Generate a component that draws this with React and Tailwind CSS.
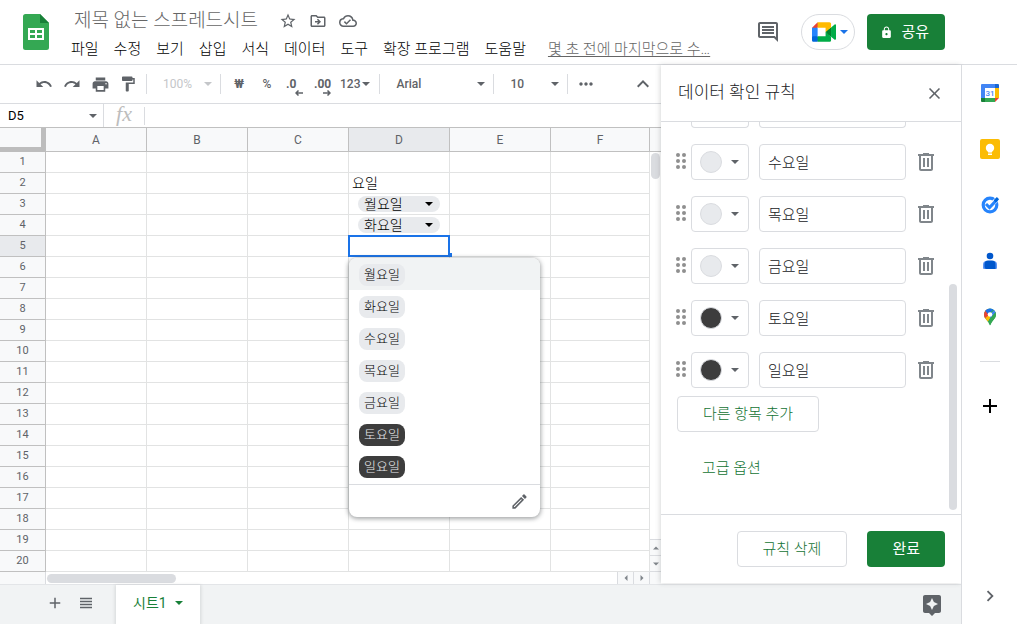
import React, { useState } from 'react'
import clsx from 'clsx'
import {
	MdAdd,
	MdAssistant,
	MdChevronRight,
	MdClose,
	MdFormatPaint,
	MdKeyboardArrowUp,
	MdLock,
	MdMoreHoriz,
	MdOutlineCloudDone,
	MdOutlineComment,
	MdOutlineDriveFileMove,
	MdOutlineModeEdit,
	MdPrint,
	MdRedo,
	MdStarBorder,
	MdUndo,
	MdViewHeadline,
} from 'react-icons/md'

const menus = ['파일', '수정', '보기', '삽입', '서식', '데이터', '도구', '확장 프로그램', '도움말']

const columns = ['A', 'B', 'C', 'D', 'E', 'F']
const rows = Array.from({ length: 20 }, (_, i) => i + 1)
const selected = { col: 'D', row: 5 }

const cells = {
	D2: { type: 'text', value: '요일' },
	D3: { type: 'chip', value: '월요일' },
	D4: { type: 'chip', value: '화요일' },
}

const options = [
	{ label: '월요일', dark: false },
	{ label: '화요일', dark: false },
	{ label: '수요일', dark: false },
	{ label: '목요일', dark: false },
	{ label: '금요일', dark: false },
	{ label: '토요일', dark: true },
	{ label: '일요일', dark: true },
]

function Caret({ className }) {
	return (
		<svg viewBox="0 0 8 4" className={clsx('w-2 h-1 shrink-0', className)} fill="currentColor">
			<path d="M0 0h8L4 4z" />
		</svg>
	)
}

function SheetsLogo() {
	return (
		<svg viewBox="0 0 26 36" className="w-[26px] h-9">
			<path fill="#34a853" d="M2.5 0H17l9 9v24.500a2.500 2.500 0 0 1-2.500 2.500h-21A2.500 2.500 0 0 1 0 33.500v-31A2.500 2.500 0 0 1 2.500 0z" />
			<path fill="#188038" d="M17 0l9 9h-9z" />
			<path fill="#fff" fillRule="evenodd" d="M5 14h16v12H5zM7 16v3h5v-3zM14 16v3h5v-3zM7 21v3h5v-3zM14 21v3h5v-3z" />
		</svg>
	)
}

function MeetLogo() {
	return (
		<svg viewBox="0 0 87.5 72" className="w-6 h-5">
			<path fill="#fff" d="M20 20h30v32H20z" />
			<path fill="#00832d" d="M49.5 36l8.53 9.75 11.47 7.33 2-17.02-2-16.64-11.69 6.44z" />
			<path fill="#0066da" d="M0 51.5V66c0 3.315 2.685 6 6 6h14.5l3-10.96-3-9.54-9.95-3z" />
			<path fill="#e94235" d="M20.5 0L0 20.5l10.55 3 9.95-3 2.95-9.41z" />
			<path fill="#2684fc" d="M20.5 20.500H0v31h20.500z" />
			<path fill="#00ac47" d="M82.6 8.68L69.5 19.42v33.66l13.16 10.79c1.97 1.54 4.85.135 4.85-2.37V11c0-2.535-2.945-3.925-4.91-2.32zM49.5 36v15.500h-29V72h43c3.315 0 6-2.685 6-6V53.080z" />
			<path fill="#ffba00" d="M63.5 0h-43v20.500h29V36l20-16.570V6c0-3.315-2.685-6-6-6z" />
		</svg>
	)
}

function TrashIcon() {
	return (
		<svg viewBox="0 0 24 24" className="w-6 h-6" fill="currentColor">
			<path d="M15 4V3H9v1H4v2h1v13c0 1.100.9 2 2 2h10c1.100 0 2-.9 2-2V6h1V4h-5zm2 15H7V6h10v13zM9 8h2v9H9zm4 0h2v9h-2z" />
		</svg>
	)
}

function DragDots() {
	return (
		<svg viewBox="0 0 10 18" className="w-[10px] h-[18px]" fill="#8f8f8f">
			{[2, 8, 14].map(y => (
				<g key={y}>
					<circle cx="2" cy={y} r="2" />
					<circle cx="8" cy={y} r="2" />
				</g>
			))}
		</svg>
	)
}

function CalendarIcon() {
	return (
		<svg viewBox="0 0 20 20" className="w-5 h-5">
			<path fill="#4285f4" d="M2 1h13v4H5v10H1V2a1 1 0 0 1 1-1z" />
			<path fill="#1967d2" d="M15 1h3a1 1 0 0 1 1 1v3h-4z" />
			<path fill="#fbbc04" d="M15 5h4v10h-4z" />
			<path fill="#34a853" d="M5 15h10v4H5z" />
			<path fill="#188038" d="M1 15h4v4H2a1 1 0 0 1-1-1z" />
			<path fill="#ea4335" d="M15 15h4l-4 4z" />
			<path fill="#fff" d="M5 5h10v10H5z" />
			<text x="10" y="13" textAnchor="middle" fontSize="8" fontWeight="500" fill="#4285f4">31</text>
		</svg>
	)
}

function KeepIcon() {
	return (
		<svg viewBox="0 0 20 20" className="w-5 h-5">
			<rect width="20" height="20" rx="2" fill="#fbbc04" />
			<circle cx="10" cy="9" r="4.200" fill="#fff" />
			<path fill="#fff" d="M8 11h4v2.500H8zM8 14.500h4v1.500H8z" />
		</svg>
	)
}

function TasksIcon() {
	return (
		<svg viewBox="0 0 20 20" className="w-5 h-5" fill="none">
			<circle cx="10" cy="10" r="6.800" stroke="#2684fc" strokeWidth="3.200" />
			<path d="M10 11L18.500 3" stroke="#fff" strokeWidth="4.500" />
			<path d="M6 9l3.500 3.500L17 4.600" stroke="#2684fc" strokeWidth="3" />
			<path d="M14.800 6.400L18 3.200" stroke="#0066da" strokeWidth="3.200" />
		</svg>
	)
}

function ContactsIcon() {
	return (
		<svg viewBox="0 0 20 20" className="w-5 h-5">
			<circle cx="10" cy="5" r="3.300" fill="#0057cc" />
			<path fill="#5c95f5" d="M6.500 10h7a3.500 3.500 0 0 1 3.500 3.500V17a1 1 0 0 1-1 1H4a1 1 0 0 1-1-1v-3.500A3.500 3.500 0 0 1 6.500 10z" />
			<path fill="#0057cc" d="M8 9.500h4a3.500 3.500 0 0 1 3.500 3.500v5H6.500a2 2 0 0 1-2-2v-3A3.500 3.500 0 0 1 8 9.500z" />
		</svg>
	)
}

function MapsIcon() {
	return (
		<svg viewBox="0 0 20 20" className="w-5 h-5">
			<clipPath id="pin">
				<path d="M10 1.500a6 6 0 0 0-6 6c0 2.500 1.400 4 2.800 5.700C8.200 15 9 16.500 10 18.500c1-2 1.800-3.500 3.200-5.300C14.600 11.500 16 10 16 7.500a6 6 0 0 0-6-6z" />
			</clipPath>
			<g clipPath="url(#pin)">
				<path fill="#34a853" d="M0 0h20v20H0z" />
				<path fill="#fbbc04" d="M0 14l10-8.500 3 3L5.500 17z" />
				<path fill="#ea4335" d="M0 0h5l6 6-8 7z" />
				<path fill="#1a73e8" d="M4.500 3L8 7l8-6-6-3z" />
				<path fill="#4285f4" d="M10 7.500L17 0v5l-7 7z" />
				<path fill="#34a853" d="M16 4.500v10l-6 4-1-6z" />
			</g>
			<circle cx="10" cy="7.500" r="2.300" fill="#fff" />
		</svg>
	)
}

function IconButton({ label, className, children }) {
	return (
		<button type="button" aria-label={label} className={clsx('flex items-center shrink-0', className || 'justify-center')}>
			{children}
		</button>
	)
}

function Header() {
	return (
		<header className="flex items-start h-[65px] shrink-0 border-b border-[#dadce0] pl-[23px] pr-[72px] pt-[14px]">
			<SheetsLogo />
			<div className="flex-1 min-w-0 -mt-2 pl-[22px]">
				<div className="flex items-center h-[30px] text-[#5f6368]">
					<input
						aria-label="문서 제목"
						defaultValue="제목 없는 스프레드시트"
						className="w-[200px] pl-[3px] text-[19px] leading-6 font-light text-[#666] outline-none"
					/>
					<div className="flex gap-3 pl-2">
						<IconButton label="별표"><MdStarBorder size={18} /></IconButton>
						<IconButton label="이동"><MdOutlineDriveFileMove size={18} /></IconButton>
						<IconButton label="저장 상태"><MdOutlineCloudDone size={18} /></IconButton>
					</div>
				</div>
				<nav className="flex items-center h-[26px] text-[15px] font-light whitespace-nowrap">
					<div className="flex gap-[15px]">
						{menus.map(menu => (
							<button key={menu} type="button">{menu}</button>
						))}
					</div>
					<a href="#history" className="ml-[22px] text-[#666] underline underline-offset-2">몇 초 전에 마지막으로 수…</a>
				</nav>
			</div>
			<div className="flex items-center h-9 shrink-0">
				<IconButton label="댓글" className="text-[#5f6368]"><MdOutlineComment size={24} /></IconButton>
				<button type="button" aria-label="화상 회의" className="flex items-center gap-1 h-9 ml-[21px] pl-[10px] pr-[6px] border border-[#dadce0] rounded-full">
					<MeetLogo />
					<Caret className="text-[#1a73e8]" />
				</button>
				<button type="button" className="flex items-center gap-2 h-9 ml-3 pl-[13px] pr-4 rounded bg-[#188038] text-white text-[15px]">
					<MdLock size={13} />
					공유
				</button>
			</div>
		</header>
	)
}

function Divider() {
	return <div className="w-px h-5 mx-1 shrink-0 bg-[#dadce0]" />
}

function ToolbarSelect({ label, value, className }) {
	return (
		<label className={clsx('flex items-center pl-3 pr-1 shrink-0', className)}>
			<select aria-label={label} defaultValue={value} className="flex-1 min-w-0 appearance-none bg-transparent outline-none">
				<option>{value}</option>
			</select>
			<Caret />
		</label>
	)
}

function Decimals({ label, text, d }) {
	return (
		<IconButton label={label} className="relative w-7 h-7 pl-[5px] font-bold">
			{text}
			<svg viewBox="0 0 8 6" className="absolute right-[6px] bottom-[2px] w-2 h-[6px]" fill="none" stroke="currentColor" strokeWidth="1.500">
				<path d={d} />
			</svg>
		</IconButton>
	)
}

function Toolbar() {
	return (
		<div className="flex items-center h-[39px] shrink-0 border-b border-[#dadce0] pl-[30px] pr-1 text-xs text-[#5f6368]">
			<IconButton label="실행취소" className="justify-center w-7 h-7"><MdUndo size={18} /></IconButton>
			<IconButton label="재실행" className="justify-center w-7 h-7"><MdRedo size={18} /></IconButton>
			<IconButton label="인쇄" className="justify-center w-7 h-7"><MdPrint size={19} /></IconButton>
			<IconButton label="서식 복사" className="justify-center w-7 h-7"><MdFormatPaint size={18} /></IconButton>
			<Divider />
			<ToolbarSelect label="확대/축소" value="100%" className="w-[65px] text-[#c4c6c9]" />
			<Divider />
			<IconButton label="통화 형식" className="justify-center w-7 h-7 font-bold">₩</IconButton>
			<IconButton label="퍼센트 형식" className="justify-center w-7 h-7 font-medium">%</IconButton>
			<Decimals label="소수점 이하 자릿수 감소" text=".0" d="M8 3H1M3.500.5L1 3l2.500 2.500" />
			<Decimals label="소수점 이하 자릿수 증가" text=".00" d="M0 3h7M4.500.5L7 3 4.500 5.500" />
			<button type="button" className="flex items-center pl-[3px] pr-[5px] gap-[2px] font-medium">
				123
				<Caret />
			</button>
			<Divider />
			<ToolbarSelect label="글꼴" value="Arial" className="w-[105px] font-medium" />
			<Divider />
			<ToolbarSelect label="글꼴 크기" value="10" className="w-[65px] font-medium" />
			<Divider />
			<IconButton label="더보기" className="justify-center w-7 h-7"><MdMoreHoriz size={20} /></IconButton>
			<IconButton label="메뉴 숨기기" className="justify-center w-7 h-7 ml-auto"><MdKeyboardArrowUp size={24} /></IconButton>
		</div>
	)
}

function FormulaBar() {
	return (
		<div className="flex items-center h-6 shrink-0 border-b border-[#c0c0c0]">
			<div className="flex items-center w-[104px] h-full pl-2 pr-[6px] border-r border-[#dadce0] text-[#5f6368]">
				<input aria-label="이름 상자" defaultValue="D5" className="flex-1 min-w-0 text-[13px] leading-5 text-black outline-none" />
				<Caret />
			</div>
			<span className="w-10 h-6 text-center font-['Liberation_Serif',serif] italic text-[22px] leading-5 text-[#bdbdbd]">fx</span>
			<div className="w-px h-[18px] bg-[#dadce0]" />
			<input aria-label="수식" className="flex-1 min-w-0 px-2 text-[13px] outline-none" />
		</div>
	)
}

function OptionList() {
	return (
		<div className="absolute left-0 top-[22px] z-10 w-[191px] rounded-lg bg-white overflow-hidden shadow-[0_1px_4px_1px_rgba(60,64,67,0.45)]">
			<ul className="pb-[2px]">
				{options.map(({ label, dark }, i) => (
					<li key={label} className={clsx('h-8 pt-[6px] pl-[10px]', i === 0 && 'bg-[#f1f3f4]')}>
						<button
							type="button"
							className={clsx(
								'block h-[22px] px-[5px] rounded-lg text-[13px] leading-5 font-light',
								dark ? 'bg-[#3d3d3d] text-[#e8eaed]' : 'bg-[#e8eaed] text-black'
							)}
						>
							{label}
						</button>
					</li>
				))}
			</ul>
			<div className="flex justify-end h-[33px] pr-[11px] border-t border-[#dadce0] text-[#5f6368]">
				<IconButton label="규칙 수정"><MdOutlineModeEdit size={19} /></IconButton>
			</div>
		</div>
	)
}

function Cell({ col, row }) {
	const cell = cells[`${col}${row}`]
	const isSelected = col === selected.col && row === selected.row
	return (
		<td className={clsx('h-[21px] p-0 border-r border-b border-[#e2e3e3]', isSelected && 'relative')}>
			{cell?.type === 'text' && <div className="pl-[3px] text-sm leading-5 font-light">{cell.value}</div>}
			{cell?.type === 'chip' && (
				<div className="px-[9px]">
					<button type="button" className="flex items-center justify-between w-full h-4 pl-[6px] pr-[7px] rounded-full bg-[#e8eaed] text-sm leading-4 font-light">
						{cell.value}
						<Caret />
					</button>
				</div>
			)}
			{isSelected && (
				<>
					<div className="absolute -inset-px border-2 border-[#1a73e8]" />
					<div className="absolute -right-[3px] -bottom-px size-1 bg-[#1a73e8]" />
					<OptionList />
				</>
			)}
		</td>
	)
}

function Grid() {
	return (
		<table className="flex-1 w-full table-fixed border-separate border-spacing-0">
			<colgroup>
				<col className="w-[46px]" />
				{columns.slice(0, -1).map(col => <col key={col} className="w-[101px]" />)}
				<col />
			</colgroup>
			<thead>
				<tr className="h-6 text-xs text-[#5f6368]">
					<td className="p-0 bg-[#f8f9fa] border-r-[5px] border-b-[5px] border-[#bdbdbd]" />
					{columns.map(col => (
						<th
							key={col}
							className={clsx(
								'p-0 font-normal border-r border-b border-[#c0c0c0]',
								col === selected.col ? 'bg-[#e8eaed]' : 'bg-[#f8f9fa]'
							)}
						>
							{col}
						</th>
					))}
				</tr>
			</thead>
			<tbody>
				{rows.map(row => (
					<tr key={row}>
						<th
							className={clsx(
								'h-[21px] p-0 font-normal text-[11px] leading-5 text-[#5f6368] border-r border-b border-[#c0c0c0]',
								row === selected.row ? 'bg-[#e8eaed]' : 'bg-[#f8f9fa]'
							)}
						>
							{row}
						</th>
						{columns.map(col => <Cell key={col} col={col} row={row} />)}
					</tr>
				))}
			</tbody>
		</table>
	)
}

function ScrollArrow({ label, d, className }) {
	return (
		<IconButton label={label} className={clsx('justify-center bg-[#f8f9fa] border-[#dadce0]', className)}>
			<svg viewBox="0 0 6 6" className="w-[6px] h-[6px]" fill="#80868b">
				<path d={d} />
			</svg>
		</IconButton>
	)
}

function Sheet() {
	return (
		<section className="flex-1 min-w-0 flex flex-col">
			<Toolbar />
			<FormulaBar />
			<div className="flex">
				<div className="flex-1 min-w-0">
					<Grid />
				</div>
				<div className="flex flex-col w-[11px] shrink-0 border-b border-[#dadce0]">
					<div className="h-6 shrink-0 bg-[#f8f9fa] border-b border-[#c0c0c0]" />
					<div className="flex-1 pt-px pl-px">
						<div className="w-[9px] h-[26px] rounded-full bg-[#dadce0]" />
					</div>
					<ScrollArrow label="위로 스크롤" d="M0 4.500h6L3 1.500z" className="h-4 border-t" />
					<ScrollArrow label="아래로 스크롤" d="M0 1.500h6L3 4.500z" className="h-4 border-t" />
				</div>
			</div>
			<div className="flex h-3 shrink-0">
				<div className="w-[46px] bg-[#f8f9fa] border-r border-[#dadce0]" />
				<div className="flex-1 py-[2px] pl-px">
					<div className="w-[129px] h-[9px] rounded-full bg-[#dadce0]" />
				</div>
				<ScrollArrow label="왼쪽으로 스크롤" d="M4.500 0v6L1.500 3z" className="w-4 border-l" />
				<ScrollArrow label="오른쪽으로 스크롤" d="M1.500 0v6l3-3z" className="w-[17px] border-x" />
				<div className="w-[11px] bg-[#f8f9fa]" />
			</div>
		</section>
	)
}

function RuleRow({ label, dark }) {
	const [value, setValue] = useState(label)
	return (
		<li className="flex items-center h-9">
			<DragDots />
			<button type="button" aria-label={`${label} 색상`} className="flex items-center gap-[9px] w-[58px] h-9 ml-[5px] pl-2 border border-[#dadce0] rounded text-[#5f6368]">
				<span className={clsx('size-[22px] rounded-full border border-[#dadce0]', dark ? 'bg-[#3d3d3d]' : 'bg-[#e8eaed]')} />
				<Caret />
			</button>
			<input
				aria-label={`${label} 항목`}
				value={value}
				onChange={e => setValue(e.target.value)}
				className="flex-1 min-w-0 h-9 mx-[10px] pl-2 pb-[2px] border border-[#dadce0] rounded text-[15px] font-light text-[#202124] outline-none"
			/>
			<IconButton label={`${label} 삭제`} className="-ml-[2px] text-[#80868b]"><TrashIcon /></IconButton>
		</li>
	)
}

function RulesPanel() {
	return (
		<aside className="relative z-20 flex flex-col w-[300px] mb-px shrink-0 bg-white shadow-[-1px_0_5px_rgba(60,64,67,0.2)]">
			<div className="flex items-center justify-between h-[57px] shrink-0 border-b border-[#dadce0] pl-[17px] pr-[17px]">
				<h2 className="text-[17px] font-light text-[#202124]">데이터 확인 규칙</h2>
				<IconButton label="닫기" className="text-[#5f6368]"><MdClose size={19} /></IconButton>
			</div>
			<div className="flex-1 flex">
				<div className="flex-1 min-w-0 pl-[15px] pr-[11px]">
					{/* bottom edge of the row scrolled out above */}
					<div className="flex h-[6px] pl-[15px] pr-8">
						<div className="w-[58px] border border-t-0 border-[#dadce0] rounded-b" />
						<div className="flex-1 ml-[10px] border border-t-0 border-[#dadce0] rounded-b" />
					</div>
					<ul className="flex flex-col gap-4 pt-4">
						{options.slice(2).map(option => <RuleRow key={option.label} {...option} />)}
					</ul>
					<div className="flex flex-col items-start gap-[18px] pt-2 pl-px text-[15px] text-[#137333]">
						<button type="button" className="h-9 px-[25px] border border-[#dadce0] rounded font-light">다른 항목 추가</button>
						<button type="button" className="h-9 px-[25px] font-light">고급 옵션</button>
					</div>
				</div>
				<div className="self-end w-2 h-[226px] mr-1 mb-1 rounded-full bg-[#dadce0]" />
			</div>
			<div className="flex items-start justify-end gap-5 h-[69px] shrink-0 border-t border-[#dadce0] pt-4 pr-4 text-[15px]">
				<button type="button" className="h-9 px-[25px] border border-[#dadce0] rounded font-light text-[#137333]">규칙 삭제</button>
				<button type="button" className="h-9 px-[25px] rounded bg-[#188038] text-white">완료</button>
			</div>
		</aside>
	)
}

function BottomBar() {
	return (
		<footer className="flex flex-1 min-h-10 border-t border-[#e3e5e8] bg-[#f1f3f4] text-[#5f6368]">
			<div className="flex items-start gap-[13px] w-[116px] pl-[46px] pt-[9px] shrink-0">
				<IconButton label="시트 추가"><MdAdd size={18} /></IconButton>
				<IconButton label="모든 시트"><MdViewHeadline size={18} /></IconButton>
			</div>
			<button type="button" className="flex items-start gap-2 h-full px-[17px] pt-2 bg-white shadow-[0_1px_3px_1px_rgba(60,64,67,0.15)] text-sm text-[#188038]">
				시트1
				<span className="flex items-center h-5"><Caret /></span>
			</button>
			<IconButton label="탐색" className="ml-auto mr-[17px]"><MdAssistant size={24} /></IconButton>
		</footer>
	)
}

const apps = [
	{ label: 'Calendar', Icon: CalendarIcon },
	{ label: 'Keep', Icon: KeepIcon },
	{ label: 'Tasks', Icon: TasksIcon },
	{ label: '연락처', Icon: ContactsIcon },
	{ label: '지도', Icon: MapsIcon },
]

function SideRail() {
	return (
		<aside className="relative z-20 flex flex-col items-center w-14 shrink-0 bg-white border-l border-[#dadce0]">
			{apps.map(({ label, Icon }) => (
				<IconButton key={label} label={label} className="justify-center w-full h-14"><Icon /></IconButton>
			))}
			<div className="w-5 h-px mt-4 mb-4 bg-[#dadce0]" />
			<IconButton label="부가기능 설치하기" className="justify-center w-full h-14"><MdAdd size={24} /></IconButton>
			<IconButton label="측면 패널 숨기기" className="justify-center w-full h-14 mt-auto text-[#5f6368]"><MdChevronRight size={22} /></IconButton>
		</aside>
	)
}

export default function App() {
	return (
		<div className="flex flex-col min-h-screen bg-white text-black font-['Roboto','Noto_Sans_CJK_KR',sans-serif]">
			<Header />
			<div className="flex-1 flex">
				<main className="flex-1 min-w-0 flex flex-col">
					<div className="flex">
						<Sheet />
						<RulesPanel />
					</div>
					<BottomBar />
				</main>
				<SideRail />
			</div>
		</div>
	)
}
